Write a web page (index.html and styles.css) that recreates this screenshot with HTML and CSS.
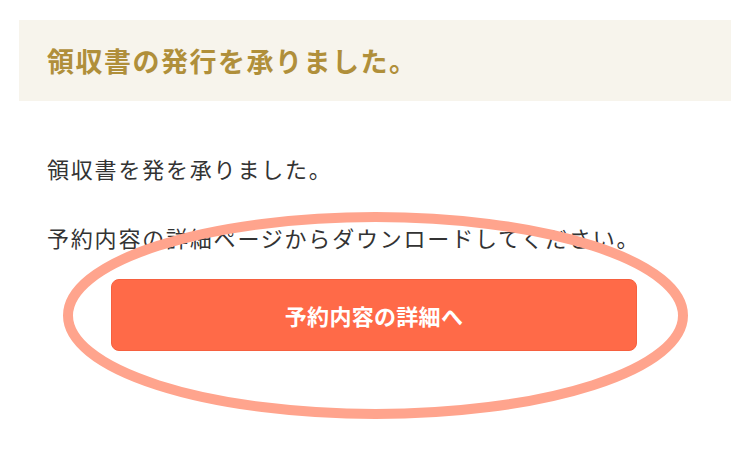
FILE: index.html
```html
<!DOCTYPE html>
<html lang="ja">
<head>
<meta charset="utf-8">
<link rel="stylesheet" href="styles.css">
</head>
<body>
<div class="page">
  <div class="band">
    <h1 class="title">領収書の発行を承りました。</h1>
  </div>
  <div class="content">
    <p class="msg msg-first">領収書を発を承りました。</p>
    <p class="msg msg-second">予約内容の詳細ページからダウンロードしてください。</p>
    <div class="actions">
      <a class="btn">予約内容の詳細へ</a>
    </div>
  </div>
  <svg class="annot" width="750" height="451" viewBox="0 0 750 451">
    <ellipse cx="375.5" cy="315.5" rx="307.5" ry="98.5" fill="none" stroke="#ffa48d" stroke-width="10"/>
  </svg>
</div>
</body>
</html>
```
FILE: styles.css
```css
html, body {
  margin: 0;
  padding: 0;
  background: #ffffff;
}
body {
  font-family: "Noto Sans CJK JP", "Noto Sans", sans-serif;
  width: 750px;
  height: 451px;
  overflow: hidden;
}
.page {
  position: relative;
  width: 750px;
  height: 451px;
  padding: 20px 19px 0 19px;
  box-sizing: border-box;
}
.band {
  background: #f7f4ec;
  height: 81px;
  display: flex;
  align-items: center;
  padding-left: 28px;
}
.title {
  margin: 0;
  font-size: 27px;
  font-weight: 700;
  color: #b08f3a;
  line-height: 1;
  letter-spacing: 1.5px;
}
.content {
  padding: 0 28px;
}
.msg {
  margin: 0;
  font-size: 22px;
  color: #333333;
  line-height: 1;
  font-weight: 400;
  letter-spacing: 1.8px;
}
.msg-first {
  padding-top: 56px;
}
.msg-second {
  padding-top: 47px;
}
.actions {
  display: flex;
  justify-content: center;
  padding-top: 31px;
  padding-right: 2px;
}
.btn {
  display: flex;
  align-items: center;
  justify-content: center;
  width: 526px;
  height: 72px;
  box-sizing: border-box;
  background: #ff6a48;
  border: 1px solid #f6603f;
  border-radius: 8px;
  color: #ffffff;
  font-size: 22px;
  font-weight: 700;
  letter-spacing: 0.3px;
  text-decoration: none;
}
.annot {
  position: absolute;
  left: 0;
  top: 0;
  pointer-events: none;
}
```
